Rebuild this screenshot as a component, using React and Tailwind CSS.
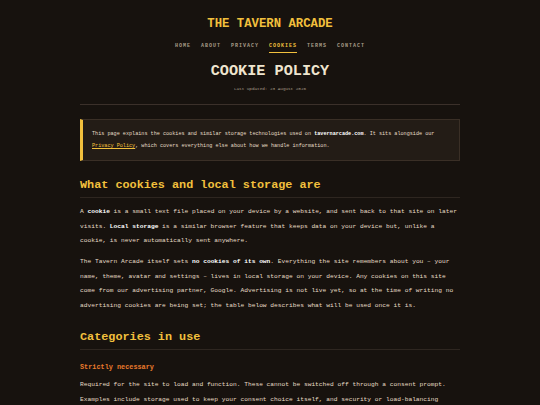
const mono = { fontFamily: '"Liberation Mono", "DejaVu Sans Mono", monospace' };

const nav = ['HOME', 'ABOUT', 'PRIVACY', 'COOKIES', 'TERMS', 'CONTACT'];

export default function App() {
  return (
    <div className="min-h-[405px] bg-[#17120e] text-[#e6dcc6]" style={mono}>
      <div className="w-[380px] mx-auto">
        {/* Cabecera */}
        <header className="pt-[16px] pb-[12px] border-b border-[#3b302a] text-center">
          <h1 className="text-[12.3px] leading-[16px] font-bold text-[#f2c03d]">THE TAVERN ARCADE</h1>
          <nav className="mt-[10px] flex justify-center gap-[10px]">
            {nav.map(n => (
              <span
                key={n}
                className={
                  n === 'COOKIES'
                    ? 'text-[5px] leading-[8px] tracking-[1px] pb-[2px] border-b border-[#f2c03d] text-[#f2c03d] font-bold'
                    : 'text-[5px] leading-[8px] tracking-[1px] pb-[2px] border-b border-transparent text-[#a89c88] font-bold'
                }
              >
                {n}
              </span>
            ))}
          </nav>
          <h2 className="mt-[9px] text-[15.2px] leading-[18px] font-bold text-[#efe5cf]">COOKIE POLICY</h2>
          <p className="mt-[6px] text-[4.3px] leading-[6px] text-[#a89c88]">Last updated: 23 August 2026</p>
        </header>

        {/* Aviso */}
        <div className="mt-[14px] bg-[#231c16] border border-[#3a2f26] border-l-[3px] border-l-[#f2c03d] pl-[9px] pr-[8px] py-[8px] text-[5.15px] leading-[12px] text-[#e6dcc6]">
          This page explains the cookies and similar storage technologies used on{' '}
          <b className="text-white">tavernarcade.com</b>. It sits alongside our{' '}
          <span className="text-[#f2c03d] underline">Privacy Policy</span>, which covers everything else about how we handle information.
        </div>

        <h2 className="mt-[16px] pb-[4px] border-b border-[#2e2620] text-[11.8px] leading-[16px] font-bold text-[#f2c03d]">
          What cookies and local storage are
        </h2>
        <p className="mt-[7px] text-[6.22px] leading-[14.5px]">
          A <b className="text-white">cookie</b> is a small text file placed on your device by a website, and sent back to that site on later visits. <b className="text-white">Local storage</b> is a similar browser feature that keeps data on your device but, unlike a cookie, is never automatically sent anywhere.
        </p>
        <p className="mt-[6.5px] text-[6.22px] leading-[14.5px]">
          The Tavern Arcade itself sets <b className="text-white">no cookies of its own</b>. Everything the site remembers about you – your name, theme, avatar and settings – lives in local storage on your device. Any cookies on this site come from our advertising partner, Google. Advertising is not live yet, so at the time of writing no advertising cookies are being set; the table below describes what will be used once it is.
        </p>

        <h2 className="mt-[16px] pb-[4px] border-b border-[#2e2620] text-[11.8px] leading-[16px] font-bold text-[#f2c03d]">
          Categories in use
        </h2>
        <h3 className="mt-[12px] text-[6.85px] leading-[10px] font-bold text-[#ea7a2c]">Strictly necessary</h3>
        <p className="mt-[6px] text-[6.22px] leading-[14.5px]">
          Required for the site to load and function. These cannot be switched off through a consent prompt. Examples include storage used to keep your consent choice itself, and security or load-balancing cookies set by the hosting provider.
        </p>
      </div>
    </div>
  );
}
